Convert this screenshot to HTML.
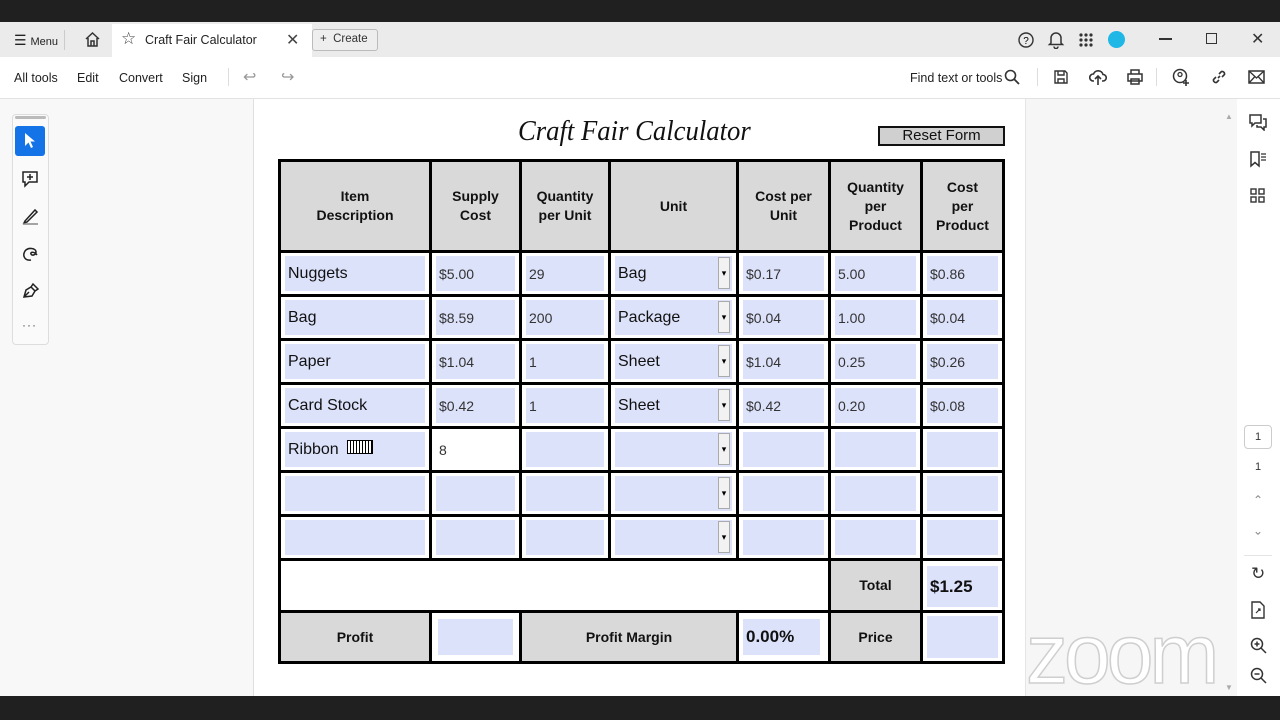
<!DOCTYPE html>
<html><head><meta charset="utf-8"><style>
*{margin:0;padding:0;box-sizing:border-box}
body{width:1280px;height:720px;overflow:hidden;background:#fff;font-family:"Liberation Sans",sans-serif;position:relative}
.a{position:absolute}
.tb{font-size:12.5px;color:#222}
#grid{position:absolute;left:278px;top:159px;width:727px;height:505px;background:#000;padding:3px;display:grid;gap:3px;
grid-template-columns:148px 87px 86px 125px 89px 89px 79px;
grid-template-rows:88px repeat(7,41px) 49px 48px}
#grid>div{background:#fff;position:relative}
.h{background:#d9d9d9 !important;display:flex;align-items:center;justify-content:center;text-align:center;font-weight:bold;font-size:14px;line-height:19px;color:#111}
.f{position:absolute;left:4px;right:4px;top:3px;bottom:3px;background:#dde2fb;font-size:16px;color:#111;display:flex;align-items:center;padding-left:3px}
.f.n{font-size:14px;color:#333}
.dd{position:absolute;right:6px;top:4px;width:12px;height:32px;background:#f2f2f2;border:1px solid #aaa;font-size:9px;text-align:center;line-height:30px;color:#000}
svg{display:block}
</style></head><body>
<div class="a" style="left:0;top:0;width:1280px;height:22px;background:#202020"></div>
<div class="a" style="left:0;top:22px;width:1280px;height:35px;background:#ebebeb"></div>
<div class="a" style="left:112px;top:24px;width:200px;height:33px;background:#fff"></div>
<div class="a tb" style="left:14px;top:32px;font-size:14px">☰ <span style="font-size:11px">Menu</span></div>
<div class="a" style="left:64px;top:30px;width:1px;height:20px;background:#ccc"></div>
<svg class="a" style="left:84px;top:31px" width="17" height="17" viewBox="0 0 17 17"><path d="M2 8L8.5 2L15 8M4 7V15H13V7M7 15V10H10V15" fill="none" stroke="#333" stroke-width="1.5"/></svg>
<div class="a" style="left:121px;top:29px;font-size:17px;color:#444">☆</div>
<div class="a tb" style="left:145px;top:33px">Craft Fair Calculator</div>
<div class="a" style="left:286px;top:30px;font-size:16px;color:#444">✕</div>
<div class="a" style="left:312px;top:29px;width:66px;height:22px;border:1px solid #bbb;border-radius:3px;background:#eee;font-size:11.5px;padding:3px 0 0 7px;color:#333">+&nbsp;&nbsp;Create</div>
<svg class="a" style="left:1017px;top:31px" width="18" height="18"><circle cx="9" cy="9" r="7" fill="none" stroke="#333" stroke-width="1.4"/><text x="9" y="13" font-size="10" text-anchor="middle" font-family="Liberation Sans">?</text></svg>
<svg class="a" style="left:1047px;top:30px" width="18" height="19"><path d="M4 13V8A5 5 0 0 1 14 8V13L15.5 14.5H2.5ZM7 16.5A2 2 0 0 0 11 16.5" fill="none" stroke="#333" stroke-width="1.5"/></svg>
<svg class="a" style="left:1078px;top:32px" width="16" height="16"><g fill="#333"><circle cx="3" cy="3" r="1.6"/><circle cx="8" cy="3" r="1.6"/><circle cx="13" cy="3" r="1.6"/><circle cx="3" cy="8" r="1.6"/><circle cx="8" cy="8" r="1.6"/><circle cx="13" cy="8" r="1.6"/><circle cx="3" cy="13" r="1.6"/><circle cx="8" cy="13" r="1.6"/><circle cx="13" cy="13" r="1.6"/></g></svg>
<div class="a" style="left:1108px;top:31px;width:17px;height:17px;border-radius:50%;background:#1fb7e6"></div>
<div class="a" style="left:1159px;top:38px;width:13px;height:1.5px;background:#333"></div>
<div class="a" style="left:1206px;top:33px;width:11px;height:11px;border:1.3px solid #333"></div>
<div class="a" style="left:1251px;top:29px;font-size:16px;color:#333">✕</div>
<div class="a tb" style="left:14px;top:71px">All tools</div>
<div class="a tb" style="left:77px;top:71px">Edit</div>
<div class="a tb" style="left:119px;top:71px">Convert</div>
<div class="a tb" style="left:182px;top:71px">Sign</div>
<div class="a" style="left:228px;top:68px;width:1px;height:18px;background:#ddd"></div>
<div class="a" style="left:243px;top:67px;font-size:16px;color:#999">↩</div>
<div class="a" style="left:281px;top:67px;font-size:16px;color:#999">↪</div>
<div class="a tb" style="left:910px;top:71px">Find text or tools</div>
<svg class="a" style="left:1004px;top:69px" width="16" height="16"><circle cx="6.5" cy="6.5" r="5" fill="none" stroke="#333" stroke-width="1.6"/><path d="M10 10L15 15" stroke="#333" stroke-width="1.8"/></svg>
<div class="a" style="left:1037px;top:68px;width:1px;height:18px;background:#ddd"></div>
<svg class="a" style="left:1053px;top:69px" width="16" height="16"><path d="M2 2H12L14 4V14H2Z M5 2V6H11V2 M5 14V10H11V14" fill="none" stroke="#333" stroke-width="1.4"/></svg>
<svg class="a" style="left:1089px;top:68px" width="18" height="18"><path d="M5 13H4A3.5 3.5 0 0 1 4.5 6A5 5 0 0 1 14 6.5A3 3 0 0 1 14 13H13M9 17V8M6 11L9 8L12 11" fill="none" stroke="#333" stroke-width="1.6"/></svg>
<svg class="a" style="left:1126px;top:69px" width="18" height="16"><path d="M5 5V1H13V5M2 5H16V12H2ZM5 10H13V15H5Z" fill="#fff" stroke="#333" stroke-width="1.5"/></svg>
<div class="a" style="left:1156px;top:68px;width:1px;height:18px;background:#ddd"></div>
<svg class="a" style="left:1172px;top:68px" width="18" height="18"><circle cx="8" cy="8" r="6.5" fill="none" stroke="#333" stroke-width="1.5"/><circle cx="8" cy="6.5" r="2" fill="none" stroke="#333" stroke-width="1.3"/><path d="M14 12V18M11 15H17" stroke="#333" stroke-width="1.6"/></svg>
<svg class="a" style="left:1211px;top:69px" width="16" height="16"><path d="M7 9L9 7M5 8L2.5 10.5A2.5 2.5 0 0 0 5.5 13.5L8 11M8 5L10.5 2.5A2.5 2.5 0 0 1 13.5 5.5L11 8" fill="none" stroke="#333" stroke-width="1.6"/></svg>
<svg class="a" style="left:1248px;top:70px" width="17" height="14"><rect x="1" y="1" width="15" height="12" fill="none" stroke="#333" stroke-width="1.5"/><path d="M1 1L8.5 8L16 1M1 13L6.5 7M16 13L10.5 7" fill="none" stroke="#333" stroke-width="1.3"/></svg>
<div class="a" style="left:0;top:98px;width:1280px;height:1px;background:#e2e2e2"></div>
<div class="a" style="left:0;top:99px;width:253px;height:597px;background:#f8f8f8"></div>
<div class="a" style="left:253px;top:99px;width:1px;height:597px;background:#e0e0e0"></div>
<div class="a" style="left:1025px;top:99px;width:212px;height:597px;background:#f6f6f6;border-left:1px solid #e5e5e5"></div>
<div class="a" style="left:1237px;top:99px;width:43px;height:597px;background:#fff"></div>
<div class="a" style="left:1225px;top:112px;font-size:8px;color:#aaa">▲</div>
<div class="a" style="left:1225px;top:683px;font-size:8px;color:#aaa">▼</div>
<div class="a" style="left:12px;top:114px;width:37px;height:231px;border:1px solid #ddd;border-radius:4px;background:#fafafa"></div>
<div class="a" style="left:15px;top:116px;width:31px;height:3px;background:#bbb;border-radius:2px"></div>
<div class="a" style="left:15px;top:126px;width:30px;height:30px;background:#1473e6;border-radius:3px"></div>
<svg class="a" style="left:22px;top:132px" width="18" height="18"><path d="M3 1V14L6.5 10.5L9 16L11 15L8.5 9.5H13Z" fill="#fff"/></svg>
<svg class="a" style="left:21px;top:170px" width="20" height="18"><path d="M2 2H16V12H8L4 16V12H2Z" fill="none" stroke="#222" stroke-width="1.5"/><path d="M9 4V10M6 7H12" stroke="#222" stroke-width="1.5"/></svg>
<svg class="a" style="left:21px;top:207px" width="20" height="18"><path d="M4 14L14 3L16 5L6 15L3 16Z" fill="none" stroke="#222" stroke-width="1.5"/><path d="M2 17H17" stroke="#888" stroke-width="1.5"/></svg>
<svg class="a" style="left:21px;top:245px" width="20" height="18"><path d="M10 15C4 16 1 11 4 6C7 2 15 3 15 7C15 10 11 11 10 9C9 7 13 6 16 10" fill="none" stroke="#222" stroke-width="1.5"/></svg>
<svg class="a" style="left:21px;top:282px" width="20" height="18"><path d="M3 15L5 8L10 5L14 9L11 14ZM3 15L8 10M10 5L12 2L17 7L14 9" fill="none" stroke="#222" stroke-width="1.5"/></svg>
<div class="a" style="left:22px;top:318px;font-size:12px;color:#555;letter-spacing:1px">···</div>
<div class="a" style="left:0;top:696px;width:1280px;height:24px;background:#202020"></div>
<div class="a" style="left:518px;top:115px;width:250px;white-space:nowrap;font-family:'Liberation Serif',serif;font-style:italic;font-size:29px;color:#111;transform:scaleX(0.92);transform-origin:left">Craft Fair Calculator</div>
<div class="a" style="left:878px;top:126px;width:127px;height:20px;background:#d0d0d0;border:2px solid #111;font-size:15px;text-align:center;line-height:16px;color:#111">Reset Form</div>
<div id="grid">
<div class="h">Item<br>Description</div><div class="h">Supply<br>Cost</div><div class="h">Quantity<br>per Unit</div><div class="h">Unit</div><div class="h">Cost per<br>Unit</div><div class="h">Quantity<br>per<br>Product</div><div class="h">Cost<br>per<br>Product</div>

<div><div class="f">Nuggets</div></div><div><div class="f n">$5.00</div></div><div><div class="f n">29</div></div><div><div class="f">Bag</div><div class="dd">▾</div></div><div><div class="f n">$0.17</div></div><div><div class="f n">5.00</div></div><div><div class="f n">$0.86</div></div>
<div><div class="f">Bag</div></div><div><div class="f n">$8.59</div></div><div><div class="f n">200</div></div><div><div class="f">Package</div><div class="dd">▾</div></div><div><div class="f n">$0.04</div></div><div><div class="f n">1.00</div></div><div><div class="f n">$0.04</div></div>
<div><div class="f">Paper</div></div><div><div class="f n">$1.04</div></div><div><div class="f n">1</div></div><div><div class="f">Sheet</div><div class="dd">▾</div></div><div><div class="f n">$1.04</div></div><div><div class="f n">0.25</div></div><div><div class="f n">$0.26</div></div>
<div><div class="f">Card Stock</div></div><div><div class="f n">$0.42</div></div><div><div class="f n">1</div></div><div><div class="f">Sheet</div><div class="dd">▾</div></div><div><div class="f n">$0.42</div></div><div><div class="f n">0.20</div></div><div><div class="f n">$0.08</div></div>
<div><div class="f">Ribbon <span style="display:inline-block;width:26px;height:14px;border:1px solid #000;background:repeating-linear-gradient(90deg,#fff 0 2px,#000 2px 3px);margin-left:8px;margin-top:-6px"></span></div></div><div><div class="f n" style="background:#fff">8</div></div><div><div class="f"></div></div><div><div class="f"></div><div class="dd">▾</div></div><div><div class="f"></div></div><div><div class="f"></div></div><div><div class="f"></div></div>
<div><div class="f"></div></div><div><div class="f"></div></div><div><div class="f"></div></div><div><div class="f"></div><div class="dd">▾</div></div><div><div class="f"></div></div><div><div class="f"></div></div><div><div class="f"></div></div>
<div><div class="f"></div></div><div><div class="f"></div></div><div><div class="f"></div></div><div><div class="f"></div><div class="dd">▾</div></div><div><div class="f"></div></div><div><div class="f"></div></div><div><div class="f"></div></div>

<div style="grid-column:1/6"></div><div class="h">Total</div><div><div class="f" style="font-weight:bold;font-size:17px;top:5px;bottom:3px">$1.25</div></div>
<div class="h">Profit</div><div><div class="f" style="left:6px;right:6px;top:6px;bottom:6px"></div></div><div class="h" style="grid-column:3/5">Profit Margin</div><div><div class="f" style="font-weight:bold;font-size:17px;top:6px;bottom:6px;right:8px">0.00%</div></div><div class="h">Price</div><div><div class="f"></div></div>
</div>
<div class="a" style="left:1026px;top:612px;font-size:84px;color:#fff;-webkit-text-stroke:1.5px #cfcfcf;letter-spacing:-4px;line-height:84px">zoom</div>
<svg class="a" style="left:1248px;top:113px" width="20" height="18"><path d="M2 2H13V10H7L4 13V10H2ZM15 6H18V14H16V17L13 14H9V12" fill="none" stroke="#333" stroke-width="1.5"/></svg>
<svg class="a" style="left:1249px;top:150px" width="18" height="18"><path d="M2 2H10V16L6 12.5L2 16Z" fill="none" stroke="#333" stroke-width="1.5"/><path d="M12 4H17M12 7H17M12 10H17" stroke="#333" stroke-width="1.2"/></svg>
<svg class="a" style="left:1250px;top:188px" width="16" height="16"><g fill="none" stroke="#333" stroke-width="1.4"><rect x="1" y="1" width="5" height="5"/><rect x="9" y="1" width="5" height="5"/><rect x="1" y="9" width="5" height="5"/><rect x="9" y="9" width="5" height="5"/></g></svg>
<div class="a" style="left:1244px;top:425px;width:28px;height:24px;border:1px solid #ccc;border-radius:4px;font-size:11px;text-align:center;line-height:22px;color:#333">1</div>
<div class="a" style="left:1255px;top:461px;font-size:11px;color:#333">1</div>
<div class="a" style="left:1253px;top:493px;font-size:12px;color:#888">⌃</div>
<div class="a" style="left:1253px;top:523px;font-size:12px;color:#888;transform:scaleY(-1)">⌃</div>
<div class="a" style="left:1244px;top:555px;width:28px;height:1px;background:#e5e5e5"></div>
<div class="a" style="left:1251px;top:564px;font-size:17px;color:#333">↻</div>
<svg class="a" style="left:1250px;top:601px" width="16" height="18"><path d="M2 1H10L14 5V17H2Z" fill="none" stroke="#333" stroke-width="1.4"/><path d="M6 12L10 8M8 8H10V10" stroke="#333" stroke-width="1.2" fill="none"/></svg>
<svg class="a" style="left:1250px;top:637px" width="17" height="17"><circle cx="7" cy="7" r="5.5" fill="none" stroke="#333" stroke-width="1.5"/><path d="M11 11L16 16M4.5 7H9.5M7 4.5V9.5" stroke="#333" stroke-width="1.5"/></svg>
<svg class="a" style="left:1250px;top:667px" width="17" height="17"><circle cx="7" cy="7" r="5.5" fill="none" stroke="#333" stroke-width="1.5"/><path d="M11 11L16 16M4.5 7H9.5" stroke="#333" stroke-width="1.5"/></svg>
</body></html>
